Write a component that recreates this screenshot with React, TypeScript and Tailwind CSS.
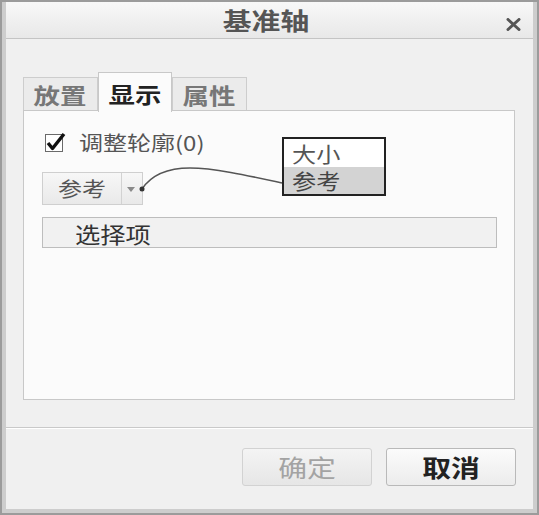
function CloseIcon() {
  return (
    <svg width="15" height="13" viewBox="0 0 15 13" className="absolute right-[12px] top-[16px]">
      <path d="M2 1.5 L13 11.5 M13 1.5 L2 11.5" stroke="#555" strokeWidth="3" strokeLinecap="round" />
    </svg>
  )
}

function CheckBox() {
  return (
    <div className="relative h-[18px] w-[18px] border border-[#6a6a6a] bg-white">
      <svg width="22" height="22" viewBox="0 0 22 22" className="absolute -left-[1px] -top-[4px]">
        <path d="M3 12 L7.5 17.5 L19 3" fill="none" stroke="#111" strokeWidth="3.4" strokeLinejoin="round" />
      </svg>
    </div>
  )
}

function Tab({ label, active }: { label: string; active?: boolean }) {
  return active ? (
    <div className="relative z-10 -mb-[2px] flex h-[40px] w-[74px] items-center justify-center border border-b-0 border-[#c8c8c8] bg-[#fbfbfb]">
      <span className="inline-block scale-x-[1.2] text-[22px] font-bold leading-none text-[#222]">{label}</span>
    </div>
  ) : (
    <div className="flex h-[33px] w-[75px] items-center justify-center border border-b-0 border-[#cdcdcd] bg-[#ebebeb]">
      <span className="inline-block scale-x-[1.2] text-[22px] font-bold leading-none text-[#777]">{label}</span>
    </div>
  )
}

export default function App() {
  return (
    <div className="relative h-[515px] w-[539px] border-2 border-[#9b9b9b] font-['Noto_Sans_CJK_SC',sans-serif]">
      <div className="flex h-full flex-col border-x-4 border-b-4 border-[#cdcdcd]">
        {/* title bar */}
        <div className="relative flex h-[37px] shrink-0 items-center justify-center border-b border-[#c4c4c4] bg-gradient-to-b from-[#f8f8f8] to-[#e8e8e8] pr-[8px]">
          <span className="inline-block scale-x-[1.2] text-[24px] font-bold leading-none text-[#555]">基准轴</span>
          <CloseIcon />
        </div>

        <div className="flex flex-1 flex-col bg-[#f0f0f0]">
          <div className="pl-[17px] pr-[18px] pt-[33px]">
            <div className="flex items-end">
              <Tab label="放置" />
              <Tab label="显示" active />
              <Tab label="属性" />
            </div>

            <div className="h-[290px] border border-[#c8c8c8] bg-[#fbfbfb] pl-[18px] pr-[17px] pt-[22px]">
              <div className="flex h-[20px] items-center">
                <div className="ml-[3px]">
                  <CheckBox />
                </div>
                <span className="ml-[16px] inline-block origin-left scale-x-[1.2] text-[20px] leading-none text-[#555]">调整轮廓(0)</span>
              </div>

              <div className="mt-[19px] flex h-[33px] w-[101px] border border-[#cfcfcf] bg-gradient-to-b from-[#f7f7f7] to-[#e9e9e9]">
                <div className="flex w-[79px] items-center justify-center border-r border-[#d2d2d2]">
                  <span className="inline-block scale-x-[1.2] text-[20px] leading-none text-[#555]">参考</span>
                </div>
                <div className="flex flex-1 items-center justify-center">
                  <svg width="8" height="6" viewBox="0 0 8 6" className="-ml-[3px] mt-[2px]">
                    <path d="M0 0 L8 0 L4 5 Z" fill="#8a8a8a" />
                  </svg>
                </div>
              </div>

              <div className="mt-[12px] flex h-[31px] items-center border border-[#bdbdbd] bg-[#f1f1f1] pl-[32px]">
                <span className="inline-block origin-left scale-x-[1.15] text-[22px] leading-none text-[#333]">选择项</span>
              </div>
            </div>
          </div>

          <div className="mt-[27px] border-t border-[#c9c9c9] border-b border-b-white" />

          <div className="flex justify-end gap-[14px] pr-[17px] pt-[19px]">
            <div className="flex h-[38px] w-[130px] items-center justify-center rounded-[3px] border border-[#d2d2d2] bg-gradient-to-b from-[#f4f4f4] to-[#e6e6e6]">
              <span className="inline-block scale-x-[1.2] text-[24px] leading-none text-[#a3a3a3]">确定</span>
            </div>
            <div className="flex h-[38px] w-[130px] items-center justify-center rounded-[3px] border border-[#b9b9b9] bg-gradient-to-b from-[#fbfbfb] to-[#ececec]">
              <span className="inline-block scale-x-[1.2] text-[24px] font-bold leading-none text-[#222]">取消</span>
            </div>
          </div>
        </div>
      </div>

      {/* annotation: pop-up list and leader line */}
      <svg width="539" height="515" className="pointer-events-none absolute -left-[2px] -top-[2px]">
        <path d="M142 189 C 150 177, 165 168, 190 168 C 215 168, 250 176, 282 183" fill="none" stroke="#555" strokeWidth="1.5" />
        <circle cx="142" cy="189" r="2.5" fill="#333" />
      </svg>
      <div className="absolute left-[280px] top-[135px] w-[104px] border-2 border-[#222] bg-white">
        <div className="flex h-[28px] items-center pl-[8px]">
          <span className="inline-block origin-left scale-x-[1.15] text-[21px] leading-[21px] text-[#555]">大小</span>
        </div>
        <div className="flex h-[27px] items-center bg-[#d3d3d3] pl-[8px]">
          <span className="inline-block origin-left scale-x-[1.15] text-[21px] leading-[21px] text-[#444]">参考</span>
        </div>
      </div>
    </div>
  )
}
